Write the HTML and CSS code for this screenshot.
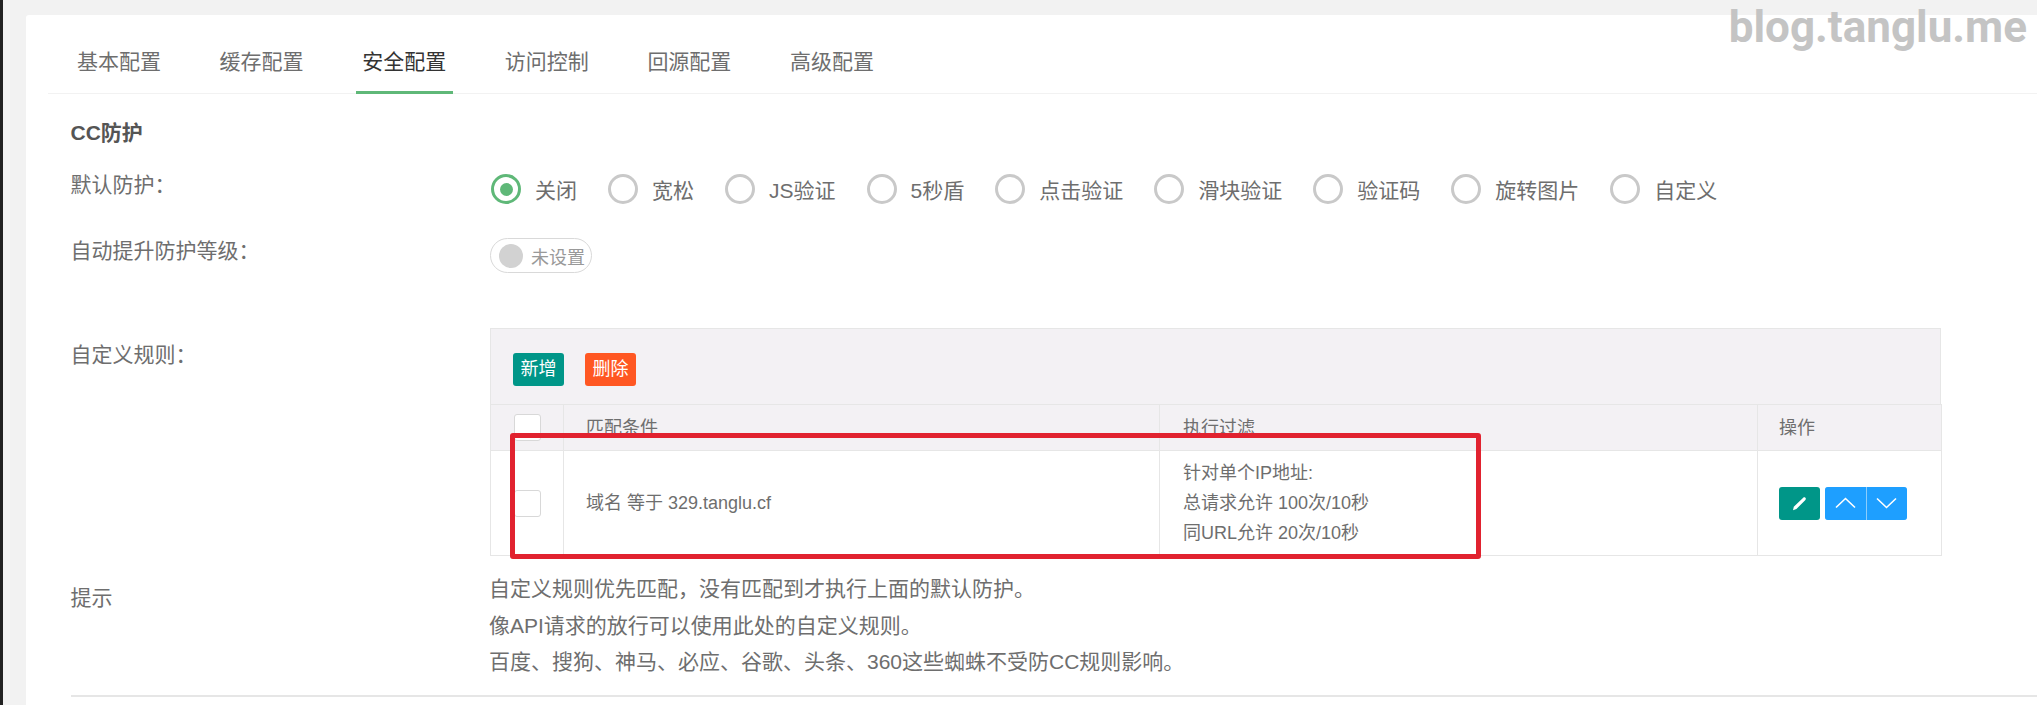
FILE: index.html
```html
<!DOCTYPE html>
<html lang="zh-CN">
<head>
<meta charset="utf-8">
<title>安全配置</title>
<link rel="stylesheet" href="styles.css">
</head>
<body>
<div class="page">
  <div class="watermark">blog.tanglu.me</div>
  <main class="card">
    <nav class="tabs">
      <a class="tab">基本配置</a>
      <a class="tab">缓存配置</a>
      <a class="tab active">安全配置</a>
      <a class="tab">访问控制</a>
      <a class="tab">回源配置</a>
      <a class="tab">高级配置</a>
    </nav>
    <section class="content">
      <h2 class="title">CC防护</h2>
      <div class="row row-default">
        <div class="label">默认防护&#xFF1A;</div>
        <div class="radios">
          <label class="radio checked"><i></i>关闭</label>
          <label class="radio"><i></i>宽松</label>
          <label class="radio"><i></i>JS验证</label>
          <label class="radio"><i></i>5秒盾</label>
          <label class="radio"><i></i>点击验证</label>
          <label class="radio"><i></i>滑块验证</label>
          <label class="radio"><i></i>验证码</label>
          <label class="radio"><i></i>旋转图片</label>
          <label class="radio"><i></i>自定义</label>
        </div>
      </div>
      <div class="row row-auto">
        <div class="label">自动提升防护等级&#xFF1A;</div>
        <div class="toggle"><i></i><span>未设置</span></div>
      </div>
      <div class="row row-rules">
        <div class="label">自定义规则&#xFF1A;</div>
        <div class="rules">
          <div class="toolbar">
            <button class="btn green">新增</button>
            <button class="btn orange">删除</button>
          </div>
          <table class="grid">
            <colgroup>
              <col class="c-check"><col class="c-match"><col class="c-filter"><col class="c-op">
            </colgroup>
            <thead>
              <tr>
                <th><span class="check"></span></th>
                <th>匹配条件</th>
                <th>执行过滤</th>
                <th>操作</th>
              </tr>
            </thead>
            <tbody>
              <tr>
                <td><span class="check"></span></td>
                <td>域名 等于 329.tanglu.cf</td>
                <td>
                  <div>针对单个IP地址:</div>
                  <div>总请求允许 100次/10秒</div>
                  <div>同URL允许 20次/10秒</div>
                </td>
                <td>
                  <div class="ops">
                    <button class="icon-btn green" aria-label="编辑">
                      <svg width="16" height="15" viewBox="0 0 16 15"><path d="M1 14.2 L1.8 10.8 L11.2 1.8 C11.9 1.2 12.8 1.2 13.4 1.8 C14 2.4 14 3.3 13.4 3.9 L4.4 13 Z" fill="#fff"/></svg>
                    </button>
                    <div class="group">
                      <button class="icon-btn blue" aria-label="上移">
                        <svg width="21" height="12" viewBox="0 0 21 12"><path d="M1 10.5 L10.5 1.5 L20 10.5" fill="none" stroke="#fff" stroke-width="1.6"/></svg>
                      </button>
                      <button class="icon-btn blue" aria-label="下移">
                        <svg width="21" height="12" viewBox="0 0 21 12"><path d="M1 1.5 L10.5 10.5 L20 1.5" fill="none" stroke="#fff" stroke-width="1.6"/></svg>
                      </button>
                    </div>
                  </div>
                </td>
              </tr>
            </tbody>
          </table>
          <div class="highlight"></div>
        </div>
      </div>
      <div class="row row-tips">
        <div class="label">提示</div>
        <div class="tips">
          <p>自定义规则优先匹配&#xFF0C;没有匹配到才执行上面的默认防护。</p>
          <p>像API请求的放行可以使用此处的自定义规则。</p>
          <p>百度、搜狗、神马、必应、谷歌、头条、360这些蜘蛛不受防CC规则影响。</p>
        </div>
      </div>
      <hr class="rule">
    </section>
  </main>
</div>
</body>
</html>
```

FILE: styles.css
```css
* { box-sizing: border-box; }
html, body { margin: 0; padding: 0; height: 100%; overflow: hidden; }
body {
  background: #f2f2f2;
  color: #6e6e6e;
  font-family: "Liberation Sans", "Noto Sans CJK SC", sans-serif;
  font-size: 21px;
}
.page {
  position: relative;
  height: 705px;
  border-left: 3px solid #222;
  padding: 15px 0 0 23px;
  overflow: hidden;
}
.watermark {
  position: absolute;
  top: 2px;
  right: 10px;
  font-family: "Roboto", sans-serif;
  font-weight: 700;
  font-size: 44px;
  line-height: 50px;
  color: #c4c4c4;
  z-index: 2;
}
.card {
  background: #fff;
  border-radius: 3px 0 0 0;
  height: 690px;
}
.tabs {
  display: flex;
  gap: 45.6px;
  height: 79px;
  margin-left: 22px;
  padding-left: 22.5px;
  border-bottom: 1px solid #f2f2f2;
}
.tab {
  height: 79px;
  width: 97px;
  padding-top: 32px;
  line-height: 30px;
  text-align: center;
  white-space: nowrap;
  border-bottom: 3px solid transparent;
}
.tab.active {
  color: #333;
  border-bottom-color: #5fb878;
}
.content { margin-left: 44.5px; padding-top: 24px; }
.title {
  margin: 0;
  font-size: 21px;
  line-height: 30px;
  font-weight: 700;
  color: #555;
}
.row { display: flex; }
.label { width: 419.5px; flex: none; line-height: 30px; white-space: nowrap; }
.row-default { margin-top: 22px; height: 34px; }
.radios { display: flex; gap: 31px; margin: 4px 0 0 1px; }
.radio { display: flex; align-items: center; gap: 14px; height: 30px; white-space: nowrap; }
.radio i {
  display: flex;
  align-items: center;
  justify-content: center;
  width: 30px;
  height: 30px;
  border: 3px solid #c9c9c9;
  border-radius: 50%;
}
.radio.checked i { border-color: #5fb878; }
.radio.checked i::after {
  content: "";
  width: 13px;
  height: 13px;
  border-radius: 50%;
  background: #5fb878;
}
.row-auto { margin-top: 31px; height: 38px; }
.row-auto .label { padding-top: 1px; }
.toggle {
  display: flex;
  align-items: center;
  gap: 8px;
  width: 102px;
  height: 35px;
  margin-top: 3px;
  padding-left: 8px;
  border: 1px solid #d9d9d9;
  border-radius: 18px;
  font-size: 18px;
  color: #999;
  white-space: nowrap;
}
.toggle i { width: 24px; height: 24px; flex: none; border-radius: 50%; background: #d2d2d2; }
.row-rules { margin-top: 55px; }
.row-rules .label { padding-top: 12px; }
.rules { position: relative; width: 1451px; font-size: 18px; }
.toolbar {
  display: flex;
  gap: 21px;
  height: 76px;
  padding: 24px 0 0 22px;
  background: #f3f1f4;
  border: 1px solid #e6e6e6;
  border-bottom: 0;
}
.btn {
  width: 51px;
  height: 33px;
  padding: 0;
  border: 0;
  border-radius: 3px;
  color: #fff;
  font: inherit;
  line-height: 33px;
}
.green { background: #009688; }
.orange { background: #ff5722; }
.blue { background: #1e9fff; }
.grid { width: 100%; table-layout: fixed; border-collapse: collapse; }
.c-check { width: 73px; }
.c-match { width: 596px; }
.c-filter { width: 598px; }
.c-op { width: 184px; }
.grid th, .grid td {
  padding: 0 0 0 23px;
  border: 1px solid #e6e6e6;
  text-align: left;
  font-weight: 400;
  line-height: 30px;
}
.grid th:first-child, .grid td:first-child { padding: 0; text-align: center; }
.grid th:nth-child(2), .grid td:nth-child(2) { padding-left: 22px; }
.grid th { height: 46px; background: #f3f1f4; }
.grid td { height: 105px; }
.grid th:last-child, .grid td:last-child { padding-left: 21px; }
.check {
  display: block;
  width: 27px;
  height: 27px;
  margin: 0 auto;
  background: #fff;
  border: 1px solid #d8d8d8;
  border-radius: 3px;
}
.ops { display: flex; gap: 5px; }
.group { display: flex; gap: 1px; border-radius: 3px; overflow: hidden; background: #8ccdfc; }
.icon-btn {
  display: flex;
  align-items: center;
  justify-content: center;
  width: 41px;
  height: 33px;
  padding: 0;
  border: 0;
  border-radius: 3px;
}
.group .icon-btn { border-radius: 0; width: 40.5px; }
.highlight {
  position: absolute;
  left: 20px;
  top: 105px;
  width: 971px;
  height: 126px;
  border: 5px solid #e1222f;
  border-radius: 3px;
  pointer-events: none;
}
.row-tips { margin-top: 15px; }
.row-tips .label { padding-top: 12px; }
.tips { margin-left: -1px; }
.tips p { margin: 0; line-height: 36.5px; white-space: nowrap; }
.rule { margin: 14px 0 0; height: 2px; border: 0; background: #e6e6e6; }
```
